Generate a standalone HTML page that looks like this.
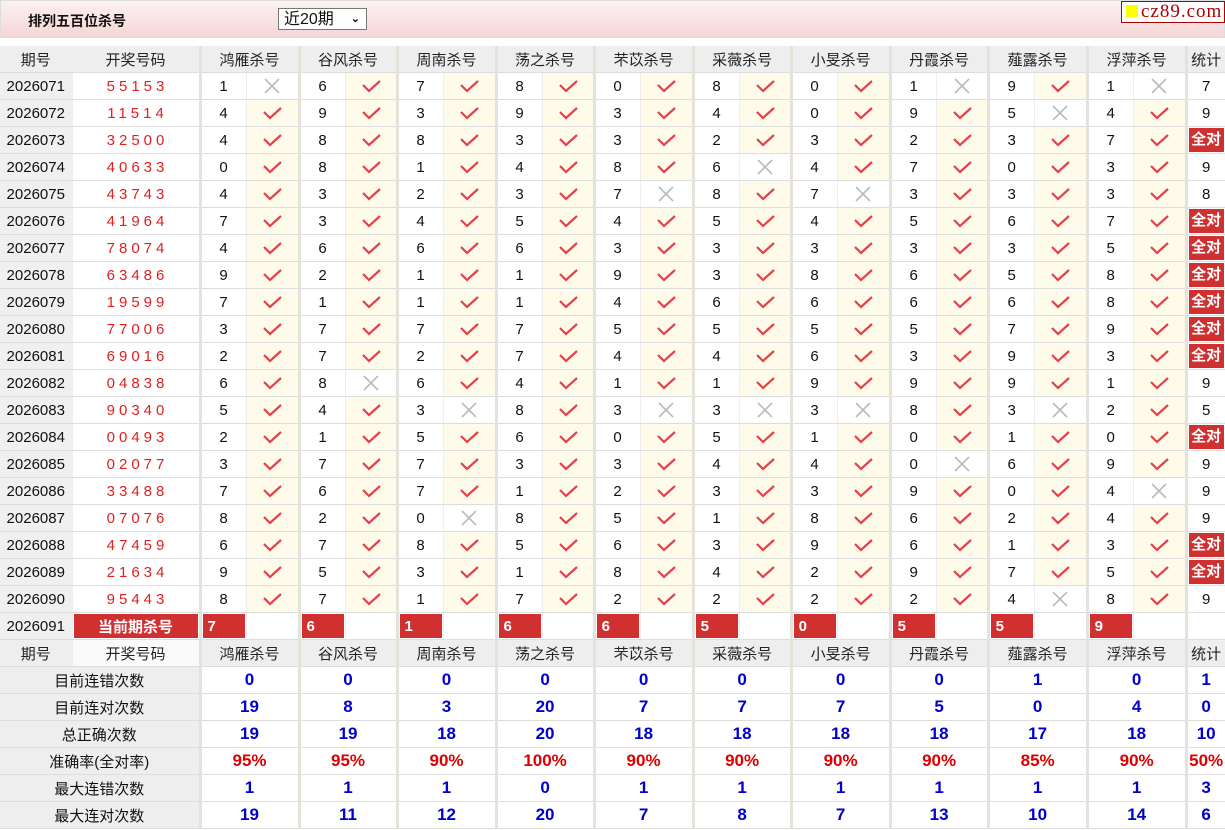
<!DOCTYPE html>
<html><head><meta charset="utf-8"><style>
body{margin:0;background:#fff;font-family:"Liberation Sans","Noto Sans CJK SC",sans-serif;font-size:15px;color:#111;width:1225px;height:830px;overflow:hidden;position:relative}
.top{position:absolute;left:0;top:0;width:1223px;height:36px;border:1px solid #ddd;background:linear-gradient(#fdf1f1,#f5d6d6)}
.title{position:absolute;left:27px;top:10px;font-weight:bold;font-size:14px}
.sel{position:absolute;left:277px;top:7px;height:22px;border:1px solid #777;background:#fff;font-size:16px;line-height:21px;padding-left:5px;box-sizing:border-box;width:89px}
.sel b{position:absolute;right:6px;top:0;font-weight:bold;font-size:11px}
.logo{position:absolute;left:1120px;top:0;width:102px;height:20px;border:1px solid #a00;background:#fff;font-family:"Liberation Serif",serif;font-size:19px;color:#a00;line-height:19px;letter-spacing:1px}
.logo i{display:inline-block;width:12px;height:12px;background:#ff0;margin:0 3px 0 4px}
table{position:absolute;left:0;top:46px;border-collapse:collapse;table-layout:fixed;width:1225px}
td{height:26px;padding:0;border-bottom:1px solid #ddd;border-right:1px solid #eee;text-align:center;white-space:nowrap;overflow:hidden}
td.g{border-left:3px solid #e3e3dc}
tr.h td{background:#eee;color:#222}
td.id{background:#f0f0f0}
td.code{color:#e02020;letter-spacing:4px;padding-left:4px}
td.v{background:#fffbeb}
svg{display:block;margin:0 auto}
.ck{fill:none;stroke:#e5404a;stroke-width:2.2}
.cx{fill:none;stroke:#bbb;stroke-width:1.6}
td.r{background:#d03030;color:#fff;font-weight:bold;text-align:left;padding-left:6px;box-shadow:inset 0 0 0 1px #fff}
td.cur{background:#d03030;color:#fff;font-weight:bold;box-shadow:inset 0 0 0 1px #fff}
td.all{background:#fff}
td.all span{display:block;background:#d03030;color:#fff;font-weight:bold;margin:1px;line-height:24px}
td.lab{background:#eee}
td.s{color:#0000cc;font-weight:bold;font-size:17px;font-family:"Liberation Sans",sans-serif}
td.p{color:#dd0000;font-weight:bold;font-size:17px}
</style></head><body>
<svg width="0" height="0" style="position:absolute"><defs>
<symbol id="k" viewBox="0 0 24 16"><path class="ck" d="M4 7L10 13L21 3"/></symbol>
<symbol id="x" viewBox="0 0 24 16"><path class="cx" d="M5 1L19 15M19 1L5 15"/></symbol>
</defs></svg>
<div class="top"><div class="title">排列五百位杀号</div><div class="sel">近20期<b>&#8964;</b></div><div class="logo"><i></i>cz89.com</div></div>
<table>
<colgroup><col style="width:72px"><col style="width:128px">
<col style="width:46px"><col style="width:53px"><col style="width:46px"><col style="width:52px"><col style="width:46px"><col style="width:53px"><col style="width:46px"><col style="width:52px"><col style="width:46px"><col style="width:53px"><col style="width:46px"><col style="width:52px"><col style="width:46px"><col style="width:53px"><col style="width:46px"><col style="width:52px"><col style="width:46px"><col style="width:53px"><col style="width:46px"><col style="width:53px"><col style="width:39px"></colgroup>
<tr class="h"><td>期号</td><td>开奖号码</td><td class="g" colspan="2">鸿雁杀号</td><td class="g" colspan="2">谷风杀号</td><td class="g" colspan="2">周南杀号</td><td class="g" colspan="2">荡之杀号</td><td class="g" colspan="2">芣苡杀号</td><td class="g" colspan="2">采薇杀号</td><td class="g" colspan="2">小旻杀号</td><td class="g" colspan="2">丹霞杀号</td><td class="g" colspan="2">薤露杀号</td><td class="g" colspan="2">浮萍杀号</td><td class="g">统计</td></tr>
<tr><td class="id">2026071</td><td class="code">55153</td><td class="g">1</td><td><svg width="24" height="16"><use href="#x"/></svg></td><td class="g">6</td><td class="v"><svg width="24" height="16"><use href="#k"/></svg></td><td class="g">7</td><td class="v"><svg width="24" height="16"><use href="#k"/></svg></td><td class="g">8</td><td class="v"><svg width="24" height="16"><use href="#k"/></svg></td><td class="g">0</td><td class="v"><svg width="24" height="16"><use href="#k"/></svg></td><td class="g">8</td><td class="v"><svg width="24" height="16"><use href="#k"/></svg></td><td class="g">0</td><td class="v"><svg width="24" height="16"><use href="#k"/></svg></td><td class="g">1</td><td><svg width="24" height="16"><use href="#x"/></svg></td><td class="g">9</td><td class="v"><svg width="24" height="16"><use href="#k"/></svg></td><td class="g">1</td><td><svg width="24" height="16"><use href="#x"/></svg></td><td class="g">7</td></tr>
<tr><td class="id">2026072</td><td class="code">11514</td><td class="g">4</td><td class="v"><svg width="24" height="16"><use href="#k"/></svg></td><td class="g">9</td><td class="v"><svg width="24" height="16"><use href="#k"/></svg></td><td class="g">3</td><td class="v"><svg width="24" height="16"><use href="#k"/></svg></td><td class="g">9</td><td class="v"><svg width="24" height="16"><use href="#k"/></svg></td><td class="g">3</td><td class="v"><svg width="24" height="16"><use href="#k"/></svg></td><td class="g">4</td><td class="v"><svg width="24" height="16"><use href="#k"/></svg></td><td class="g">0</td><td class="v"><svg width="24" height="16"><use href="#k"/></svg></td><td class="g">9</td><td class="v"><svg width="24" height="16"><use href="#k"/></svg></td><td class="g">5</td><td><svg width="24" height="16"><use href="#x"/></svg></td><td class="g">4</td><td class="v"><svg width="24" height="16"><use href="#k"/></svg></td><td class="g">9</td></tr>
<tr><td class="id">2026073</td><td class="code">32500</td><td class="g">4</td><td class="v"><svg width="24" height="16"><use href="#k"/></svg></td><td class="g">8</td><td class="v"><svg width="24" height="16"><use href="#k"/></svg></td><td class="g">8</td><td class="v"><svg width="24" height="16"><use href="#k"/></svg></td><td class="g">3</td><td class="v"><svg width="24" height="16"><use href="#k"/></svg></td><td class="g">3</td><td class="v"><svg width="24" height="16"><use href="#k"/></svg></td><td class="g">2</td><td class="v"><svg width="24" height="16"><use href="#k"/></svg></td><td class="g">3</td><td class="v"><svg width="24" height="16"><use href="#k"/></svg></td><td class="g">2</td><td class="v"><svg width="24" height="16"><use href="#k"/></svg></td><td class="g">3</td><td class="v"><svg width="24" height="16"><use href="#k"/></svg></td><td class="g">7</td><td class="v"><svg width="24" height="16"><use href="#k"/></svg></td><td class="g all"><span>全对</span></td></tr>
<tr><td class="id">2026074</td><td class="code">40633</td><td class="g">0</td><td class="v"><svg width="24" height="16"><use href="#k"/></svg></td><td class="g">8</td><td class="v"><svg width="24" height="16"><use href="#k"/></svg></td><td class="g">1</td><td class="v"><svg width="24" height="16"><use href="#k"/></svg></td><td class="g">4</td><td class="v"><svg width="24" height="16"><use href="#k"/></svg></td><td class="g">8</td><td class="v"><svg width="24" height="16"><use href="#k"/></svg></td><td class="g">6</td><td><svg width="24" height="16"><use href="#x"/></svg></td><td class="g">4</td><td class="v"><svg width="24" height="16"><use href="#k"/></svg></td><td class="g">7</td><td class="v"><svg width="24" height="16"><use href="#k"/></svg></td><td class="g">0</td><td class="v"><svg width="24" height="16"><use href="#k"/></svg></td><td class="g">3</td><td class="v"><svg width="24" height="16"><use href="#k"/></svg></td><td class="g">9</td></tr>
<tr><td class="id">2026075</td><td class="code">43743</td><td class="g">4</td><td class="v"><svg width="24" height="16"><use href="#k"/></svg></td><td class="g">3</td><td class="v"><svg width="24" height="16"><use href="#k"/></svg></td><td class="g">2</td><td class="v"><svg width="24" height="16"><use href="#k"/></svg></td><td class="g">3</td><td class="v"><svg width="24" height="16"><use href="#k"/></svg></td><td class="g">7</td><td><svg width="24" height="16"><use href="#x"/></svg></td><td class="g">8</td><td class="v"><svg width="24" height="16"><use href="#k"/></svg></td><td class="g">7</td><td><svg width="24" height="16"><use href="#x"/></svg></td><td class="g">3</td><td class="v"><svg width="24" height="16"><use href="#k"/></svg></td><td class="g">3</td><td class="v"><svg width="24" height="16"><use href="#k"/></svg></td><td class="g">3</td><td class="v"><svg width="24" height="16"><use href="#k"/></svg></td><td class="g">8</td></tr>
<tr><td class="id">2026076</td><td class="code">41964</td><td class="g">7</td><td class="v"><svg width="24" height="16"><use href="#k"/></svg></td><td class="g">3</td><td class="v"><svg width="24" height="16"><use href="#k"/></svg></td><td class="g">4</td><td class="v"><svg width="24" height="16"><use href="#k"/></svg></td><td class="g">5</td><td class="v"><svg width="24" height="16"><use href="#k"/></svg></td><td class="g">4</td><td class="v"><svg width="24" height="16"><use href="#k"/></svg></td><td class="g">5</td><td class="v"><svg width="24" height="16"><use href="#k"/></svg></td><td class="g">4</td><td class="v"><svg width="24" height="16"><use href="#k"/></svg></td><td class="g">5</td><td class="v"><svg width="24" height="16"><use href="#k"/></svg></td><td class="g">6</td><td class="v"><svg width="24" height="16"><use href="#k"/></svg></td><td class="g">7</td><td class="v"><svg width="24" height="16"><use href="#k"/></svg></td><td class="g all"><span>全对</span></td></tr>
<tr><td class="id">2026077</td><td class="code">78074</td><td class="g">4</td><td class="v"><svg width="24" height="16"><use href="#k"/></svg></td><td class="g">6</td><td class="v"><svg width="24" height="16"><use href="#k"/></svg></td><td class="g">6</td><td class="v"><svg width="24" height="16"><use href="#k"/></svg></td><td class="g">6</td><td class="v"><svg width="24" height="16"><use href="#k"/></svg></td><td class="g">3</td><td class="v"><svg width="24" height="16"><use href="#k"/></svg></td><td class="g">3</td><td class="v"><svg width="24" height="16"><use href="#k"/></svg></td><td class="g">3</td><td class="v"><svg width="24" height="16"><use href="#k"/></svg></td><td class="g">3</td><td class="v"><svg width="24" height="16"><use href="#k"/></svg></td><td class="g">3</td><td class="v"><svg width="24" height="16"><use href="#k"/></svg></td><td class="g">5</td><td class="v"><svg width="24" height="16"><use href="#k"/></svg></td><td class="g all"><span>全对</span></td></tr>
<tr><td class="id">2026078</td><td class="code">63486</td><td class="g">9</td><td class="v"><svg width="24" height="16"><use href="#k"/></svg></td><td class="g">2</td><td class="v"><svg width="24" height="16"><use href="#k"/></svg></td><td class="g">1</td><td class="v"><svg width="24" height="16"><use href="#k"/></svg></td><td class="g">1</td><td class="v"><svg width="24" height="16"><use href="#k"/></svg></td><td class="g">9</td><td class="v"><svg width="24" height="16"><use href="#k"/></svg></td><td class="g">3</td><td class="v"><svg width="24" height="16"><use href="#k"/></svg></td><td class="g">8</td><td class="v"><svg width="24" height="16"><use href="#k"/></svg></td><td class="g">6</td><td class="v"><svg width="24" height="16"><use href="#k"/></svg></td><td class="g">5</td><td class="v"><svg width="24" height="16"><use href="#k"/></svg></td><td class="g">8</td><td class="v"><svg width="24" height="16"><use href="#k"/></svg></td><td class="g all"><span>全对</span></td></tr>
<tr><td class="id">2026079</td><td class="code">19599</td><td class="g">7</td><td class="v"><svg width="24" height="16"><use href="#k"/></svg></td><td class="g">1</td><td class="v"><svg width="24" height="16"><use href="#k"/></svg></td><td class="g">1</td><td class="v"><svg width="24" height="16"><use href="#k"/></svg></td><td class="g">1</td><td class="v"><svg width="24" height="16"><use href="#k"/></svg></td><td class="g">4</td><td class="v"><svg width="24" height="16"><use href="#k"/></svg></td><td class="g">6</td><td class="v"><svg width="24" height="16"><use href="#k"/></svg></td><td class="g">6</td><td class="v"><svg width="24" height="16"><use href="#k"/></svg></td><td class="g">6</td><td class="v"><svg width="24" height="16"><use href="#k"/></svg></td><td class="g">6</td><td class="v"><svg width="24" height="16"><use href="#k"/></svg></td><td class="g">8</td><td class="v"><svg width="24" height="16"><use href="#k"/></svg></td><td class="g all"><span>全对</span></td></tr>
<tr><td class="id">2026080</td><td class="code">77006</td><td class="g">3</td><td class="v"><svg width="24" height="16"><use href="#k"/></svg></td><td class="g">7</td><td class="v"><svg width="24" height="16"><use href="#k"/></svg></td><td class="g">7</td><td class="v"><svg width="24" height="16"><use href="#k"/></svg></td><td class="g">7</td><td class="v"><svg width="24" height="16"><use href="#k"/></svg></td><td class="g">5</td><td class="v"><svg width="24" height="16"><use href="#k"/></svg></td><td class="g">5</td><td class="v"><svg width="24" height="16"><use href="#k"/></svg></td><td class="g">5</td><td class="v"><svg width="24" height="16"><use href="#k"/></svg></td><td class="g">5</td><td class="v"><svg width="24" height="16"><use href="#k"/></svg></td><td class="g">7</td><td class="v"><svg width="24" height="16"><use href="#k"/></svg></td><td class="g">9</td><td class="v"><svg width="24" height="16"><use href="#k"/></svg></td><td class="g all"><span>全对</span></td></tr>
<tr><td class="id">2026081</td><td class="code">69016</td><td class="g">2</td><td class="v"><svg width="24" height="16"><use href="#k"/></svg></td><td class="g">7</td><td class="v"><svg width="24" height="16"><use href="#k"/></svg></td><td class="g">2</td><td class="v"><svg width="24" height="16"><use href="#k"/></svg></td><td class="g">7</td><td class="v"><svg width="24" height="16"><use href="#k"/></svg></td><td class="g">4</td><td class="v"><svg width="24" height="16"><use href="#k"/></svg></td><td class="g">4</td><td class="v"><svg width="24" height="16"><use href="#k"/></svg></td><td class="g">6</td><td class="v"><svg width="24" height="16"><use href="#k"/></svg></td><td class="g">3</td><td class="v"><svg width="24" height="16"><use href="#k"/></svg></td><td class="g">9</td><td class="v"><svg width="24" height="16"><use href="#k"/></svg></td><td class="g">3</td><td class="v"><svg width="24" height="16"><use href="#k"/></svg></td><td class="g all"><span>全对</span></td></tr>
<tr><td class="id">2026082</td><td class="code">04838</td><td class="g">6</td><td class="v"><svg width="24" height="16"><use href="#k"/></svg></td><td class="g">8</td><td><svg width="24" height="16"><use href="#x"/></svg></td><td class="g">6</td><td class="v"><svg width="24" height="16"><use href="#k"/></svg></td><td class="g">4</td><td class="v"><svg width="24" height="16"><use href="#k"/></svg></td><td class="g">1</td><td class="v"><svg width="24" height="16"><use href="#k"/></svg></td><td class="g">1</td><td class="v"><svg width="24" height="16"><use href="#k"/></svg></td><td class="g">9</td><td class="v"><svg width="24" height="16"><use href="#k"/></svg></td><td class="g">9</td><td class="v"><svg width="24" height="16"><use href="#k"/></svg></td><td class="g">9</td><td class="v"><svg width="24" height="16"><use href="#k"/></svg></td><td class="g">1</td><td class="v"><svg width="24" height="16"><use href="#k"/></svg></td><td class="g">9</td></tr>
<tr><td class="id">2026083</td><td class="code">90340</td><td class="g">5</td><td class="v"><svg width="24" height="16"><use href="#k"/></svg></td><td class="g">4</td><td class="v"><svg width="24" height="16"><use href="#k"/></svg></td><td class="g">3</td><td><svg width="24" height="16"><use href="#x"/></svg></td><td class="g">8</td><td class="v"><svg width="24" height="16"><use href="#k"/></svg></td><td class="g">3</td><td><svg width="24" height="16"><use href="#x"/></svg></td><td class="g">3</td><td><svg width="24" height="16"><use href="#x"/></svg></td><td class="g">3</td><td><svg width="24" height="16"><use href="#x"/></svg></td><td class="g">8</td><td class="v"><svg width="24" height="16"><use href="#k"/></svg></td><td class="g">3</td><td><svg width="24" height="16"><use href="#x"/></svg></td><td class="g">2</td><td class="v"><svg width="24" height="16"><use href="#k"/></svg></td><td class="g">5</td></tr>
<tr><td class="id">2026084</td><td class="code">00493</td><td class="g">2</td><td class="v"><svg width="24" height="16"><use href="#k"/></svg></td><td class="g">1</td><td class="v"><svg width="24" height="16"><use href="#k"/></svg></td><td class="g">5</td><td class="v"><svg width="24" height="16"><use href="#k"/></svg></td><td class="g">6</td><td class="v"><svg width="24" height="16"><use href="#k"/></svg></td><td class="g">0</td><td class="v"><svg width="24" height="16"><use href="#k"/></svg></td><td class="g">5</td><td class="v"><svg width="24" height="16"><use href="#k"/></svg></td><td class="g">1</td><td class="v"><svg width="24" height="16"><use href="#k"/></svg></td><td class="g">0</td><td class="v"><svg width="24" height="16"><use href="#k"/></svg></td><td class="g">1</td><td class="v"><svg width="24" height="16"><use href="#k"/></svg></td><td class="g">0</td><td class="v"><svg width="24" height="16"><use href="#k"/></svg></td><td class="g all"><span>全对</span></td></tr>
<tr><td class="id">2026085</td><td class="code">02077</td><td class="g">3</td><td class="v"><svg width="24" height="16"><use href="#k"/></svg></td><td class="g">7</td><td class="v"><svg width="24" height="16"><use href="#k"/></svg></td><td class="g">7</td><td class="v"><svg width="24" height="16"><use href="#k"/></svg></td><td class="g">3</td><td class="v"><svg width="24" height="16"><use href="#k"/></svg></td><td class="g">3</td><td class="v"><svg width="24" height="16"><use href="#k"/></svg></td><td class="g">4</td><td class="v"><svg width="24" height="16"><use href="#k"/></svg></td><td class="g">4</td><td class="v"><svg width="24" height="16"><use href="#k"/></svg></td><td class="g">0</td><td><svg width="24" height="16"><use href="#x"/></svg></td><td class="g">6</td><td class="v"><svg width="24" height="16"><use href="#k"/></svg></td><td class="g">9</td><td class="v"><svg width="24" height="16"><use href="#k"/></svg></td><td class="g">9</td></tr>
<tr><td class="id">2026086</td><td class="code">33488</td><td class="g">7</td><td class="v"><svg width="24" height="16"><use href="#k"/></svg></td><td class="g">6</td><td class="v"><svg width="24" height="16"><use href="#k"/></svg></td><td class="g">7</td><td class="v"><svg width="24" height="16"><use href="#k"/></svg></td><td class="g">1</td><td class="v"><svg width="24" height="16"><use href="#k"/></svg></td><td class="g">2</td><td class="v"><svg width="24" height="16"><use href="#k"/></svg></td><td class="g">3</td><td class="v"><svg width="24" height="16"><use href="#k"/></svg></td><td class="g">3</td><td class="v"><svg width="24" height="16"><use href="#k"/></svg></td><td class="g">9</td><td class="v"><svg width="24" height="16"><use href="#k"/></svg></td><td class="g">0</td><td class="v"><svg width="24" height="16"><use href="#k"/></svg></td><td class="g">4</td><td><svg width="24" height="16"><use href="#x"/></svg></td><td class="g">9</td></tr>
<tr><td class="id">2026087</td><td class="code">07076</td><td class="g">8</td><td class="v"><svg width="24" height="16"><use href="#k"/></svg></td><td class="g">2</td><td class="v"><svg width="24" height="16"><use href="#k"/></svg></td><td class="g">0</td><td><svg width="24" height="16"><use href="#x"/></svg></td><td class="g">8</td><td class="v"><svg width="24" height="16"><use href="#k"/></svg></td><td class="g">5</td><td class="v"><svg width="24" height="16"><use href="#k"/></svg></td><td class="g">1</td><td class="v"><svg width="24" height="16"><use href="#k"/></svg></td><td class="g">8</td><td class="v"><svg width="24" height="16"><use href="#k"/></svg></td><td class="g">6</td><td class="v"><svg width="24" height="16"><use href="#k"/></svg></td><td class="g">2</td><td class="v"><svg width="24" height="16"><use href="#k"/></svg></td><td class="g">4</td><td class="v"><svg width="24" height="16"><use href="#k"/></svg></td><td class="g">9</td></tr>
<tr><td class="id">2026088</td><td class="code">47459</td><td class="g">6</td><td class="v"><svg width="24" height="16"><use href="#k"/></svg></td><td class="g">7</td><td class="v"><svg width="24" height="16"><use href="#k"/></svg></td><td class="g">8</td><td class="v"><svg width="24" height="16"><use href="#k"/></svg></td><td class="g">5</td><td class="v"><svg width="24" height="16"><use href="#k"/></svg></td><td class="g">6</td><td class="v"><svg width="24" height="16"><use href="#k"/></svg></td><td class="g">3</td><td class="v"><svg width="24" height="16"><use href="#k"/></svg></td><td class="g">9</td><td class="v"><svg width="24" height="16"><use href="#k"/></svg></td><td class="g">6</td><td class="v"><svg width="24" height="16"><use href="#k"/></svg></td><td class="g">1</td><td class="v"><svg width="24" height="16"><use href="#k"/></svg></td><td class="g">3</td><td class="v"><svg width="24" height="16"><use href="#k"/></svg></td><td class="g all"><span>全对</span></td></tr>
<tr><td class="id">2026089</td><td class="code">21634</td><td class="g">9</td><td class="v"><svg width="24" height="16"><use href="#k"/></svg></td><td class="g">5</td><td class="v"><svg width="24" height="16"><use href="#k"/></svg></td><td class="g">3</td><td class="v"><svg width="24" height="16"><use href="#k"/></svg></td><td class="g">1</td><td class="v"><svg width="24" height="16"><use href="#k"/></svg></td><td class="g">8</td><td class="v"><svg width="24" height="16"><use href="#k"/></svg></td><td class="g">4</td><td class="v"><svg width="24" height="16"><use href="#k"/></svg></td><td class="g">2</td><td class="v"><svg width="24" height="16"><use href="#k"/></svg></td><td class="g">9</td><td class="v"><svg width="24" height="16"><use href="#k"/></svg></td><td class="g">7</td><td class="v"><svg width="24" height="16"><use href="#k"/></svg></td><td class="g">5</td><td class="v"><svg width="24" height="16"><use href="#k"/></svg></td><td class="g all"><span>全对</span></td></tr>
<tr><td class="id">2026090</td><td class="code">95443</td><td class="g">8</td><td class="v"><svg width="24" height="16"><use href="#k"/></svg></td><td class="g">7</td><td class="v"><svg width="24" height="16"><use href="#k"/></svg></td><td class="g">1</td><td class="v"><svg width="24" height="16"><use href="#k"/></svg></td><td class="g">7</td><td class="v"><svg width="24" height="16"><use href="#k"/></svg></td><td class="g">2</td><td class="v"><svg width="24" height="16"><use href="#k"/></svg></td><td class="g">2</td><td class="v"><svg width="24" height="16"><use href="#k"/></svg></td><td class="g">2</td><td class="v"><svg width="24" height="16"><use href="#k"/></svg></td><td class="g">2</td><td class="v"><svg width="24" height="16"><use href="#k"/></svg></td><td class="g">4</td><td><svg width="24" height="16"><use href="#x"/></svg></td><td class="g">8</td><td class="v"><svg width="24" height="16"><use href="#k"/></svg></td><td class="g">9</td></tr>
<tr><td class="id">2026091</td><td class="cur">当前期杀号</td><td class="g r">7</td><td></td><td class="g r">6</td><td></td><td class="g r">1</td><td></td><td class="g r">6</td><td></td><td class="g r">6</td><td></td><td class="g r">5</td><td></td><td class="g r">0</td><td></td><td class="g r">5</td><td></td><td class="g r">5</td><td></td><td class="g r">9</td><td></td><td class="g"></td></tr>
<tr class="h"><td>期号</td><td style="background:#fafafa">开奖号码</td><td class="g" colspan="2">鸿雁杀号</td><td class="g" colspan="2">谷风杀号</td><td class="g" colspan="2">周南杀号</td><td class="g" colspan="2">荡之杀号</td><td class="g" colspan="2">芣苡杀号</td><td class="g" colspan="2">采薇杀号</td><td class="g" colspan="2">小旻杀号</td><td class="g" colspan="2">丹霞杀号</td><td class="g" colspan="2">薤露杀号</td><td class="g" colspan="2">浮萍杀号</td><td class="g">统计</td></tr>
<tr><td class="lab" colspan="2">目前连错次数</td><td class="g s" colspan="2">0</td><td class="g s" colspan="2">0</td><td class="g s" colspan="2">0</td><td class="g s" colspan="2">0</td><td class="g s" colspan="2">0</td><td class="g s" colspan="2">0</td><td class="g s" colspan="2">0</td><td class="g s" colspan="2">0</td><td class="g s" colspan="2">1</td><td class="g s" colspan="2">0</td><td class="g s">1</td></tr>
<tr><td class="lab" colspan="2">目前连对次数</td><td class="g s" colspan="2">19</td><td class="g s" colspan="2">8</td><td class="g s" colspan="2">3</td><td class="g s" colspan="2">20</td><td class="g s" colspan="2">7</td><td class="g s" colspan="2">7</td><td class="g s" colspan="2">7</td><td class="g s" colspan="2">5</td><td class="g s" colspan="2">0</td><td class="g s" colspan="2">4</td><td class="g s">0</td></tr>
<tr><td class="lab" colspan="2">总正确次数</td><td class="g s" colspan="2">19</td><td class="g s" colspan="2">19</td><td class="g s" colspan="2">18</td><td class="g s" colspan="2">20</td><td class="g s" colspan="2">18</td><td class="g s" colspan="2">18</td><td class="g s" colspan="2">18</td><td class="g s" colspan="2">18</td><td class="g s" colspan="2">17</td><td class="g s" colspan="2">18</td><td class="g s">10</td></tr>
<tr><td class="lab" colspan="2">准确率(全对率)</td><td class="g p" colspan="2">95%</td><td class="g p" colspan="2">95%</td><td class="g p" colspan="2">90%</td><td class="g p" colspan="2">100%</td><td class="g p" colspan="2">90%</td><td class="g p" colspan="2">90%</td><td class="g p" colspan="2">90%</td><td class="g p" colspan="2">90%</td><td class="g p" colspan="2">85%</td><td class="g p" colspan="2">90%</td><td class="g p">50%</td></tr>
<tr><td class="lab" colspan="2">最大连错次数</td><td class="g s" colspan="2">1</td><td class="g s" colspan="2">1</td><td class="g s" colspan="2">1</td><td class="g s" colspan="2">0</td><td class="g s" colspan="2">1</td><td class="g s" colspan="2">1</td><td class="g s" colspan="2">1</td><td class="g s" colspan="2">1</td><td class="g s" colspan="2">1</td><td class="g s" colspan="2">1</td><td class="g s">3</td></tr>
<tr><td class="lab" colspan="2">最大连对次数</td><td class="g s" colspan="2">19</td><td class="g s" colspan="2">11</td><td class="g s" colspan="2">12</td><td class="g s" colspan="2">20</td><td class="g s" colspan="2">7</td><td class="g s" colspan="2">8</td><td class="g s" colspan="2">7</td><td class="g s" colspan="2">13</td><td class="g s" colspan="2">10</td><td class="g s" colspan="2">14</td><td class="g s">6</td></tr>
</table>
</body></html>
